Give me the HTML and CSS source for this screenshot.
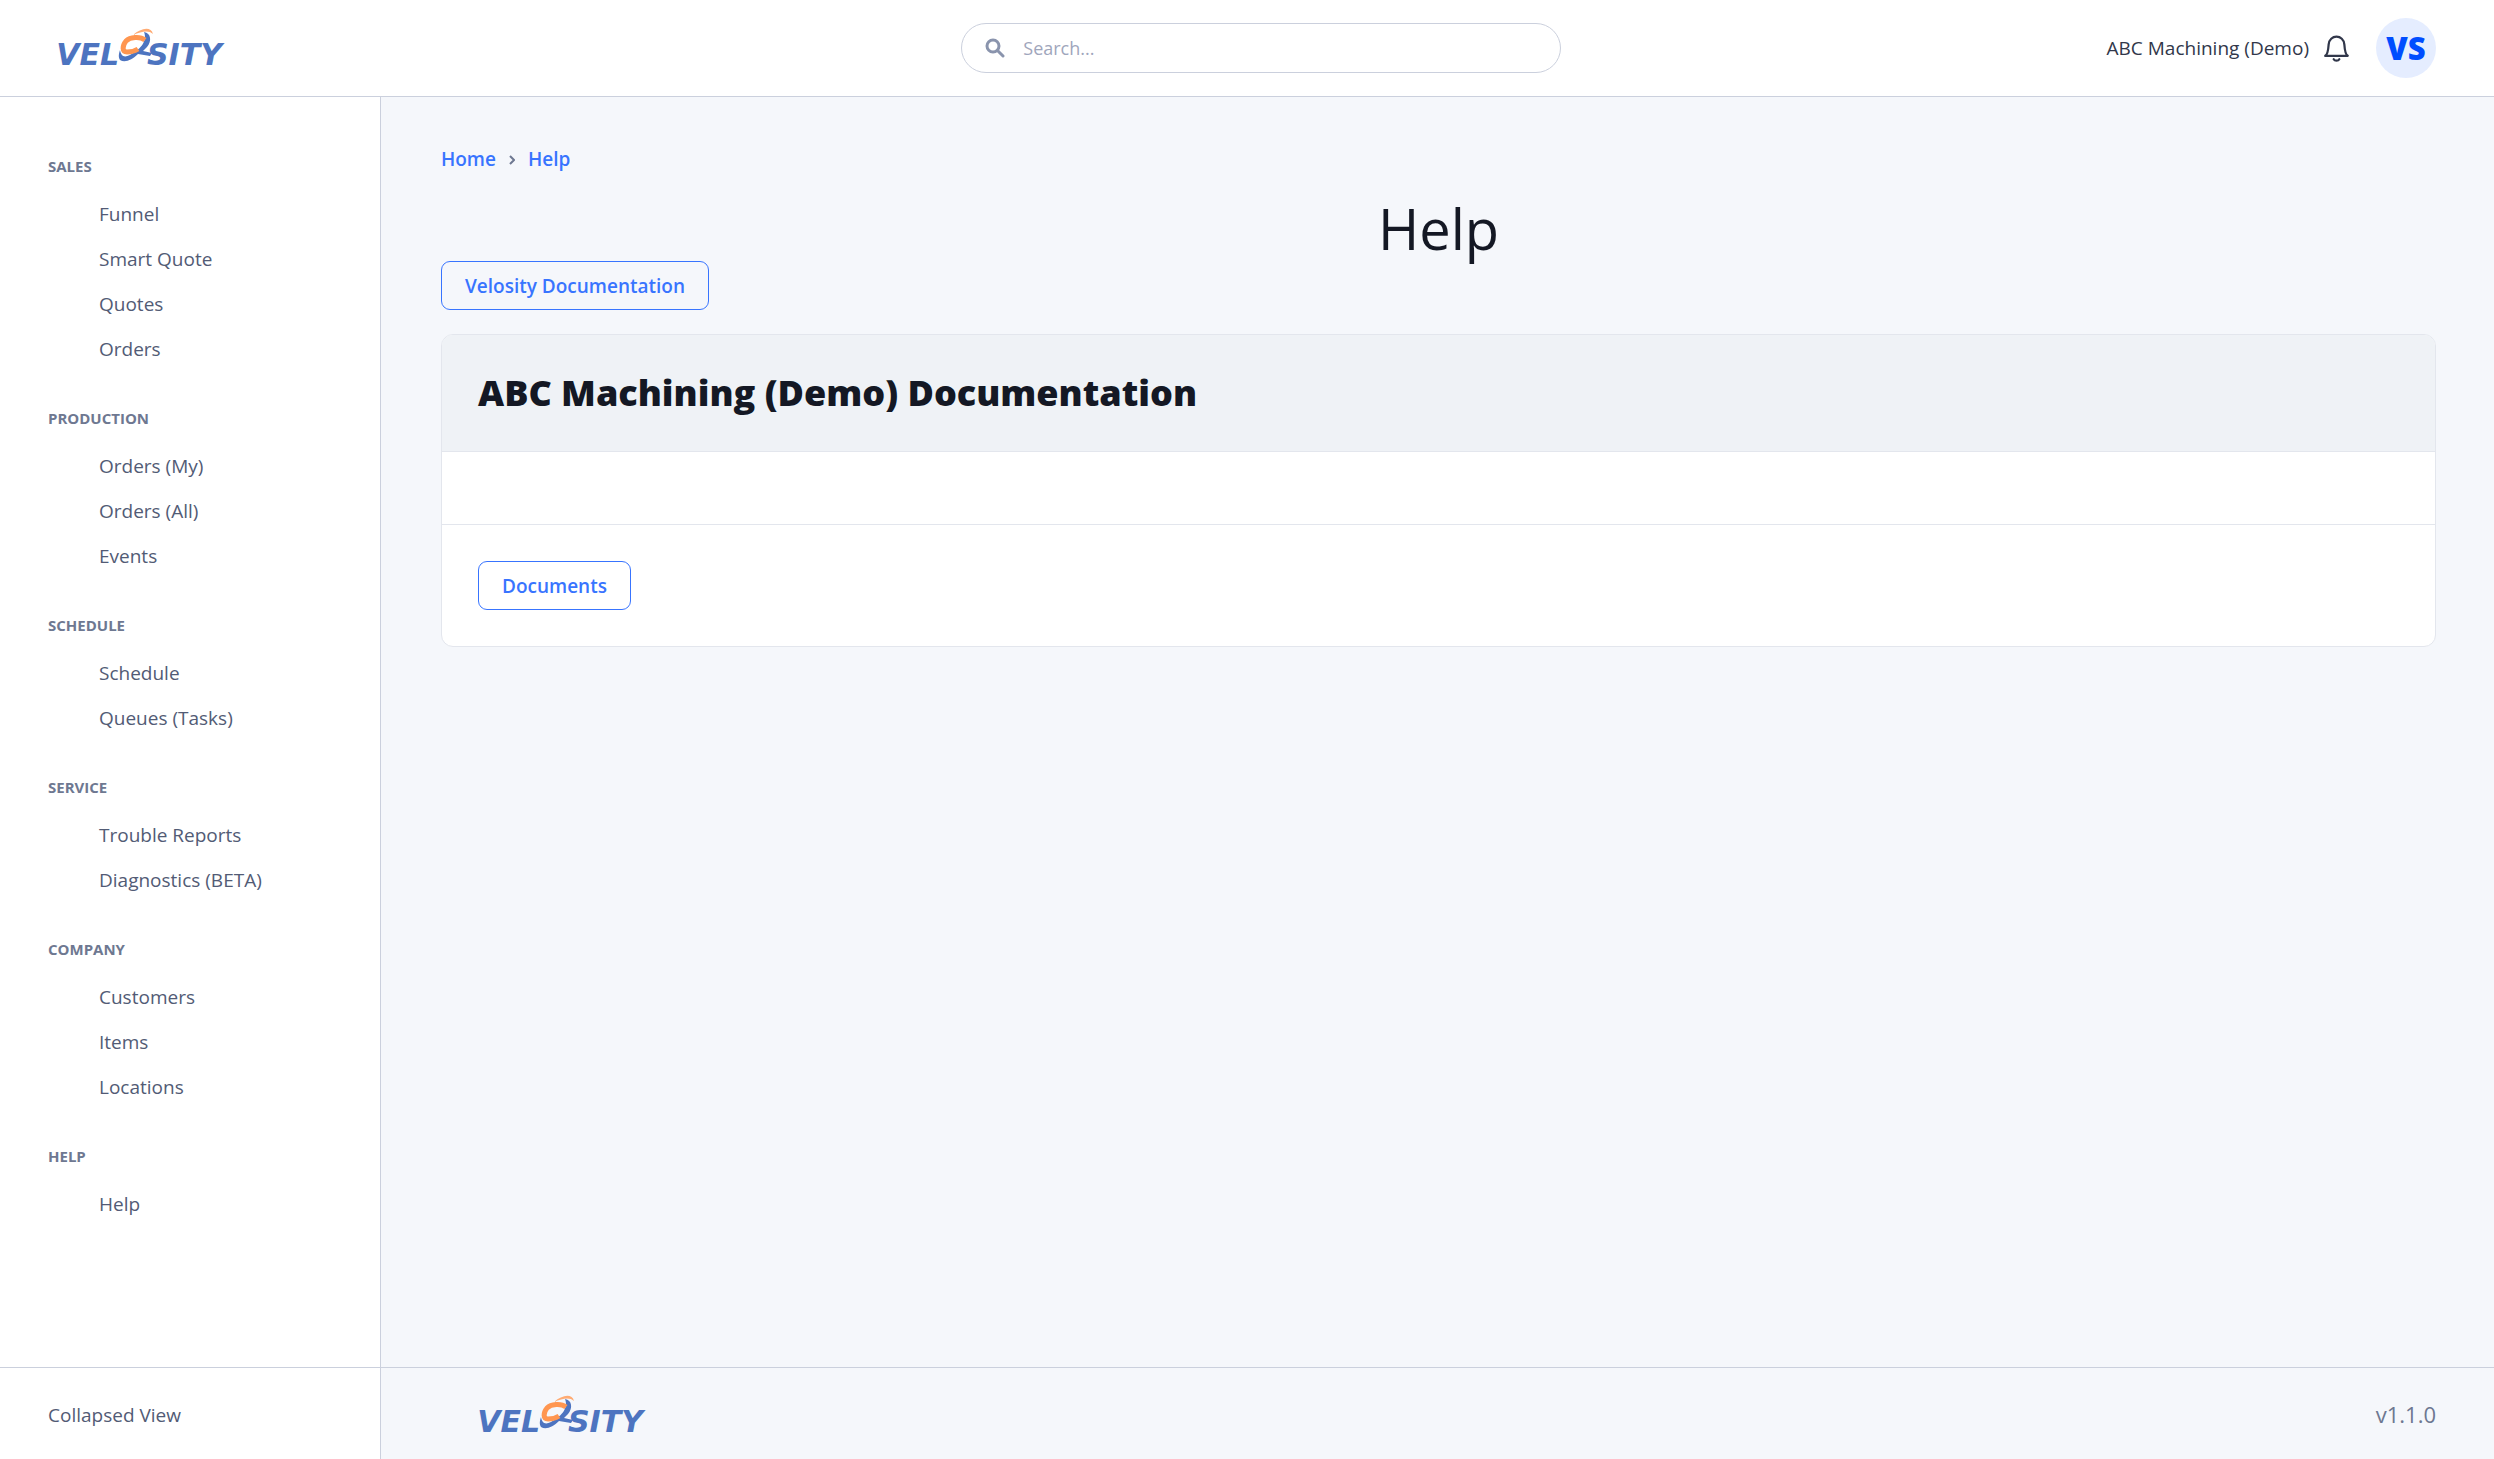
FILE: index.html
```html
<!DOCTYPE html>
<html lang="en">
<head>
<meta charset="utf-8">
<meta name="viewport" content="width=device-width, initial-scale=1">
<title>Help</title>
<link rel="stylesheet" href="styles.css">
</head>
<body>
<header class="topbar">
  <a class="brand" href="#" aria-label="Velosity">
    <svg class="logo" viewBox="0 0 188 40">
      <text class="logo-text" x="71" y="37" text-anchor="end">VEL</text>
      <text class="logo-text" x="99" y="37">SITY</text>
      <path class="logo-blue" d="M96 4C103 5 104 13 99 19L95 23L104 25L102 28L90 26C84 32 77 35 72 32C70 29 71 25 72 22C73 28 76 30 82 27C91 22 100 14 96 4Z"/>
      <path class="logo-ring" d="M97 12C92 8 82 9 78 13C74 18 74 24 79 24C83 24 87 23 90 21"/>
      <path class="logo-arc" d="M85 7C93 0 103-2 105 6C101 2 94 3 85 7Z"/>
    </svg>
  </a>
  <form class="search" role="search">
    <svg class="search-icon" viewBox="0 0 20 20" aria-hidden="true"><circle cx="8" cy="8" r="6"/><path d="M12.500 12.500L18 18"/></svg>
    <input type="search" placeholder="Search..." aria-label="Search">
  </form>
  <div class="account">
    <span class="company">ABC Machining (Demo)</span>
    <button class="bell" type="button" aria-label="Notifications">
      <svg viewBox="0 0 24 24" aria-hidden="true"><path d="M2 18.500H22C19.500 17 19.300 13 19 8.500C18.700 4 15.500 1.500 12 1.500S5.300 4 5 8.500C4.700 13 4.500 17 2 18.500Z"/><path d="M9.500 21.500C10.500 23.300 13.500 23.300 14.500 21.500"/></svg>
    </button>
    <a class="avatar" href="#">VS</a>
  </div>
</header>
<aside class="sidebar">
  <nav aria-label="Main">
    <section><h2>Sales</h2><ul><li><a href="#">Funnel</a></li><li><a href="#">Smart Quote</a></li><li><a href="#">Quotes</a></li><li><a href="#">Orders</a></li></ul></section>
    <section><h2>Production</h2><ul><li><a href="#">Orders (My)</a></li><li><a href="#">Orders (All)</a></li><li><a href="#">Events</a></li></ul></section>
    <section><h2>Schedule</h2><ul><li><a href="#">Schedule</a></li><li><a href="#">Queues (Tasks)</a></li></ul></section>
    <section><h2>Service</h2><ul><li><a href="#">Trouble Reports</a></li><li><a href="#">Diagnostics (BETA)</a></li></ul></section>
    <section><h2>Company</h2><ul><li><a href="#">Customers</a></li><li><a href="#">Items</a></li><li><a href="#">Locations</a></li></ul></section>
    <section><h2>Help</h2><ul><li><a href="#">Help</a></li></ul></section>
  </nav>
</aside>
<main class="content">
  <nav class="breadcrumb" aria-label="Breadcrumb">
    <a href="#">Home</a>
    <svg viewBox="0 0 6 10" aria-hidden="true"><path d="M1 1l4 4-4 4"/></svg>
    <a href="#">Help</a>
  </nav>
  <h1>Help</h1>
  <button class="btn" type="button">Velosity Documentation</button>
  <section class="card">
    <h2 class="card-header">ABC Machining (Demo) Documentation</h2>
    <div class="card-body"></div>
    <div class="card-footer"><button class="btn" type="button">Documents</button></div>
  </section>
</main>
<div class="collapse"><button type="button">Collapsed View</button></div>
<footer class="footer">
  <svg class="logo" viewBox="0 0 188 40" role="img" aria-label="Velosity">
    <text class="logo-text" x="71" y="37" text-anchor="end">VEL</text>
    <text class="logo-text" x="99" y="37">SITY</text>
    <path class="logo-blue" d="M96 4C103 5 104 13 99 19L95 23L104 25L102 28L90 26C84 32 77 35 72 32C70 29 71 25 72 22C73 28 76 30 82 27C91 22 100 14 96 4Z"/>
    <path class="logo-ring" d="M97 12C92 8 82 9 78 13C74 18 74 24 79 24C83 24 87 23 90 21"/>
    <path class="logo-arc" d="M85 7C93 0 103-2 105 6C101 2 94 3 85 7Z"/>
  </svg>
  <span class="version">v1.1.0</span>
</footer>
</body>
</html>
```
FILE: styles.css
```css
* { box-sizing: border-box; }

body {
  margin: 0;
  min-height: 100vh;
  display: grid;
  grid-template-columns: 381px minmax(0, 1fr);
  grid-template-rows: auto 1fr auto;
  background: #f5f7fb;
  color: #141824;
  font: 19px/27px "Open Sans", "Noto Sans", sans-serif;
}

a { text-decoration: none; }
button { font: inherit; cursor: pointer; }
ul { list-style: none; margin: 0; padding: 0; }

.logo { display: block; width: 188px; height: 40px; overflow: visible; }
.logo-text { font: italic bold 30px "DejaVu Sans", sans-serif; fill: #4d74c0; }
.logo-blue { fill: #4d74c0; }
.logo-ring { fill: none; stroke: #ff9650; stroke-width: 5; }
.logo-arc { fill: #ffab73; }

.topbar {
  grid-column: 1 / -1;
  display: flex;
  align-items: center;
  justify-content: space-between;
  height: 97px;
  padding: 0 58px 0 48px;
  background: #fff;
  border-bottom: 1px solid #cbd0dd;
}
.brand { width: 368px; }

.search {
  display: flex;
  align-items: center;
  gap: 18px;
  width: 600px;
  height: 50px;
  padding: 0 23px;
  background: #fff;
  border: 1px solid #cbd0dd;
  border-radius: 25px;
}
.search-icon { width: 20px; height: 20px; fill: none; stroke: #8a94ad; stroke-width: 3; stroke-linecap: round; }
.search input { flex: 1; min-width: 0; padding: 0; border: 0; outline: 0; background: none; font: inherit; font-size: 18px; color: #31374a; }
.search input::placeholder { color: #9fa6bc; opacity: 1; }

.account { display: flex; align-items: center; color: #31374a; font-weight: 500; }
.bell { display: flex; margin: 0 26px 0 14px; padding: 0; border: 0; background: none; }
.bell svg { width: 27px; height: 27px; fill: none; stroke: #31374a; stroke-width: 2; stroke-linecap: round; stroke-linejoin: round; }
.avatar {
  display: grid;
  place-items: center;
  width: 60px;
  height: 60px;
  border-radius: 50%;
  background: #e5edff;
  color: #004dff;
  font-size: 31px;
  font-weight: 800;
}

.sidebar { padding: 56px 48px; background: #fff; border-right: 1px solid #cbd0dd; }
.sidebar section { margin-bottom: 33px; }
.sidebar h2 {
  margin: 0 0 12px;
  font-size: 15px;
  line-height: 27px;
  font-weight: 700;
  text-transform: uppercase;
  color: #6e7891;
}
.sidebar li a { display: block; padding: 9px 0 9px 51px; color: #525b75; font-weight: 500; }

.content { padding: 49px 58px 48px 60px; }
.breadcrumb { display: flex; align-items: center; gap: 13px; font-weight: 600; }
.breadcrumb a { color: #3874ff; }
.breadcrumb svg { width: 6px; height: 10px; fill: none; stroke: #6e7891; stroke-width: 2; }
h1 { margin: 18px 0 -5px; font-size: 56px; line-height: 75px; font-weight: 400; text-align: center; }

.btn {
  display: block;
  height: 49px;
  padding: 1px 23px 0;
  background: transparent;
  border: 1px solid #3874ff;
  border-radius: 9px;
  color: #3874ff;
  font-weight: 600;
}
.card { margin-top: 24px; overflow: hidden; background: #fff; border: 1px solid #e3e6ed; border-radius: 12px; }
.card-header {
  margin: 0;
  padding: 36px;
  background: #eff2f6;
  border-bottom: 1px solid #e3e6ed;
  font-size: 36px;
  line-height: 44px;
  font-weight: 800;
}
.card-body { padding: 36px; }
.card-footer { padding: 36px; border-top: 1px solid #e3e6ed; }

.collapse { display: flex; align-items: center; padding: 4px 48px 0; background: #fff; border-top: 1px solid #cbd0dd; border-right: 1px solid #cbd0dd; }
.collapse button { padding: 0; border: 0; background: none; color: #525b75; font-weight: 500; }
.footer {
  display: flex;
  align-items: center;
  justify-content: space-between;
  height: 92px;
  padding: 2px 58px 0 88px;
  border-top: 1px solid #cbd0dd;
}
.version { font-size: 22px; font-weight: 400; color: #6e7891; }
```
